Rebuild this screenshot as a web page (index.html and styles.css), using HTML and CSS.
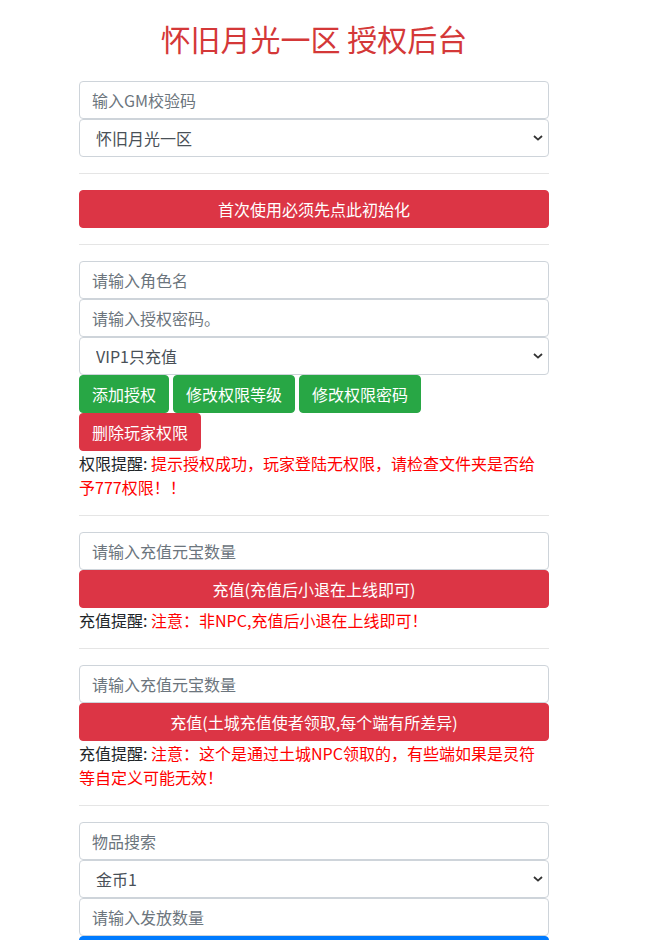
FILE: index.html
```html
<!DOCTYPE html>
<html lang="zh-CN">
<head>
  <meta charset="UTF-8" />
  <meta name="viewport" content="width=device-width, initial-scale=1.0"/>
  <title>怀旧月光一区 授权后台</title>
  <link rel="stylesheet" href="styles.css">
</head>
<body>

  <div class="container">
    <h1 class="title">怀旧月光一区 授权后台</h1>

    <input class="field" type="text" placeholder="输入GM校验码">
    <select class="field select">
      <option>怀旧月光一区</option>
    </select>

    <hr>

    <button class="btn btn-red btn-block">首次使用必须先点此初始化</button>

    <hr>

    <input class="field" type="text" placeholder="请输入角色名">
    <input class="field" type="password" placeholder="请输入授权密码。">
    <select class="field select">
      <option>VIP1只充值</option>
      <option>VIP2</option>
      <option>VIP3</option>
    </select>
    <div class="btn-row">
      <button class="btn btn-green">添加授权</button>
      <button class="btn btn-green">修改权限等级</button>
      <button class="btn btn-green">修改权限密码</button>
    </div>
    <div class="btn-row">
      <button class="btn btn-red">删除玩家权限</button>
    </div>
    <p class="tip">权限提醒: <span class="warn">提示授权成功，玩家登陆无权限，请检查文件夹是否给予777权限！！</span></p>

    <hr>

    <input class="field" type="text" placeholder="请输入充值元宝数量">
    <button class="btn btn-red btn-block">充值(充值后小退在上线即可)</button>
    <p class="tip">充值提醒: <span class="warn">注意：非NPC,充值后小退在上线即可！</span></p>

    <hr>

    <input class="field" type="text" placeholder="请输入充值元宝数量">
    <button class="btn btn-red btn-block">充值(土城充值使者领取,每个端有所差异)</button>
    <p class="tip">充值提醒: <span class="warn">注意：这个是通过土城NPC领取的，有些端如果是灵符等自定义可能无效！</span></p>

    <hr>

    <input class="field" type="text" placeholder="物品搜索">
    <select class="field select">
      <option>金币1</option>
    </select>
    <input class="field" type="text" placeholder="请输入发放数量">
    <button class="btn btn-blue btn-block">发放物品</button>
  </div>

</body>
</html>
```

FILE: styles.css
```css
body {
  margin: 0;
  padding: 0;
  background: #fff;
  color: #212529;
  font-family: "Noto Sans CJK SC", "Noto Sans", sans-serif;
  font-size: 16px;
  line-height: 24px;
}

.container {
  width: 470px;
  margin-left: 79px;
  padding-bottom: 40px;
}

.title {
  margin: 20px 0 25px;
  font-size: 30px;
  line-height: 36px;
  font-weight: normal;
  text-align: center;
  color: #d43838;
}

hr {
  margin: 16px 0;
  border: 0;
  border-top: 1px solid rgba(0,0,0,0.1);
}

.field {
  display: block;
  box-sizing: border-box;
  width: 100%;
  height: 38px;
  margin: 0;
  padding: 6px 12px;
  font-family: inherit;
  font-size: 16px;
  line-height: 24px;
  color: #495057;
  background: #fff;
  border: 1px solid #ced4da;
  border-radius: 4px;
  outline: none;
}

.field::placeholder {
  color: #6c757d;
}

.select {
  -webkit-appearance: none;
  appearance: none;
  padding-left: 16px;
  background-image: url("data:image/svg+xml,%3Csvg xmlns='http://www.w3.org/2000/svg' width='10' height='6' viewBox='0 0 10 6'%3E%3Cpath d='M1 1l4 3.6L9 1' fill='none' stroke='%23333' stroke-width='1.8'/%3E%3C/svg%3E");
  background-repeat: no-repeat;
  background-position: right 5px center;
  background-size: 10px 6px;
}

.btn-row {
  display: flex;
  gap: 4px;
}

.btn {
  display: inline-block;
  box-sizing: border-box;
  height: 38px;
  margin: 0;
  padding: 6px 12px;
  font-family: inherit;
  font-size: 16px;
  line-height: 24px;
  color: #fff;
  border: 1px solid transparent;
  border-radius: 4px;
  cursor: pointer;
}

.btn-block {
  display: block;
  width: 100%;
}

.btn-red { background: #dc3545; border-color: #dc3545; }
.btn-green { background: #28a745; border-color: #28a745; }
.btn-blue { background: #007bff; border-color: #007bff; }

.tip {
  margin: 0;
  color: #212529;
}

.warn {
  color: #ff0000;
}
```
